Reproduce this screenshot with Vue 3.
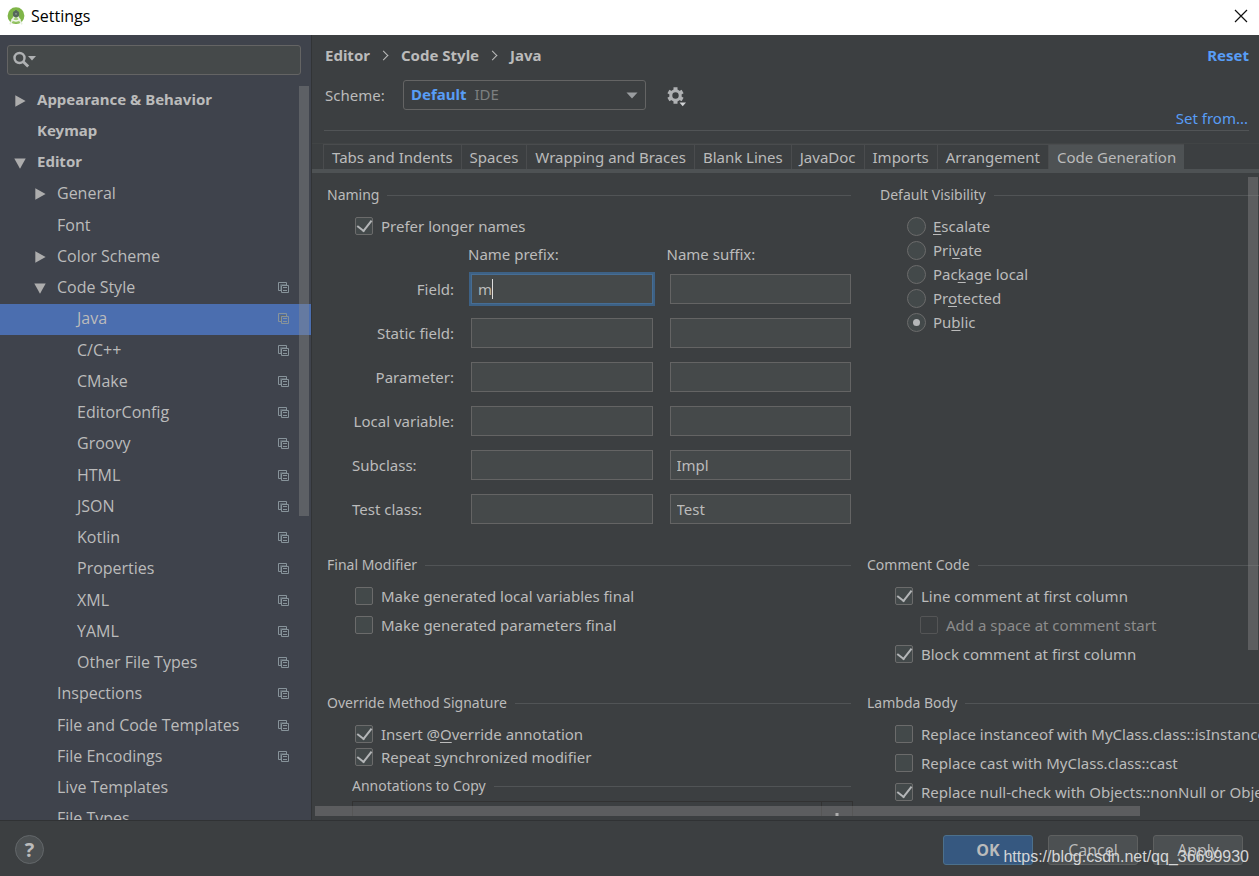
<script setup>
import { ref } from 'vue'

const tree = [
  { label: 'Appearance & Behavior', level: 0, arrow: 'right', bold: true },
  { label: 'Keymap', level: 0, bold: true },
  { label: 'Editor', level: 0, arrow: 'down', bold: true },
  { label: 'General', level: 1, arrow: 'right' },
  { label: 'Font', level: 1 },
  { label: 'Color Scheme', level: 1, arrow: 'right' },
  { label: 'Code Style', level: 1, arrow: 'down', copy: true },
  { label: 'Java', level: 2, copy: true, selected: true },
  { label: 'C/C++', level: 2, copy: true },
  { label: 'CMake', level: 2, copy: true },
  { label: 'EditorConfig', level: 2, copy: true },
  { label: 'Groovy', level: 2, copy: true },
  { label: 'HTML', level: 2, copy: true },
  { label: 'JSON', level: 2, copy: true },
  { label: 'Kotlin', level: 2, copy: true },
  { label: 'Properties', level: 2, copy: true },
  { label: 'XML', level: 2, copy: true },
  { label: 'YAML', level: 2, copy: true },
  { label: 'Other File Types', level: 2, copy: true },
  { label: 'Inspections', level: 1, copy: true },
  { label: 'File and Code Templates', level: 1, copy: true },
  { label: 'File Encodings', level: 1, copy: true },
  { label: 'Live Templates', level: 1 },
  { label: 'File Types', level: 1 }
]

const tabs = ['Tabs and Indents', 'Spaces', 'Wrapping and Braces', 'Blank Lines', 'JavaDoc', 'Imports', 'Arrangement', 'Code Generation']
const activeTab = ref('Code Generation')

const fields = ref([
  { id: 'field', label: 'Field:', prefix: 'm', suffix: '', focused: true },
  { id: 'static', label: 'Static field:', prefix: '', suffix: '' },
  { id: 'param', label: 'Parameter:', prefix: '', suffix: '' },
  { id: 'local', label: 'Local variable:', prefix: '', suffix: '' },
  { id: 'sub', label: 'Subclass:', prefix: '', suffix: 'Impl', start: true },
  { id: 'test', label: 'Test class:', prefix: '', suffix: 'Test', start: true }
])

// Each label is split as [before, mnemonic, after].
const visibility = ref('Public')
const visibilities = [
  { value: 'Escalate', parts: ['', 'E', 'scalate'] },
  { value: 'Private', parts: ['Pri', 'v', 'ate'] },
  { value: 'Package local', parts: ['Pac', 'k', 'age local'] },
  { value: 'Protected', parts: ['Pr', 'o', 'tected'] },
  { value: 'Public', parts: ['Pu', 'b', 'lic'] }
]
const search = ref('')
</script>

<template>
  <div class="window">
    <header class="titlebar">
      <svg class="logo" width="18" height="18" viewBox="0 0 18 18" aria-hidden="true">
        <circle cx="9" cy="8.7" r="8.4" fill="#7fb548" />
        <path d="M5 15.5 L8 8.5 H10 L13 15.5 Z" fill="#a5cf7a" />
        <path d="M7.8 8.6 L3 17.4 M10.2 8.6 L15 17.4" fill="none" stroke="#e6efdf" stroke-width="1.8" />
        <path d="M4.6 12 Q9 15.8 13.4 12" fill="none" stroke="#f3f6f0" stroke-width="1.4" />
        <circle cx="9" cy="7" r="3.2" fill="#56675b" />
        <path d="M8.2 3 h1.6 v2 h-1.6z" fill="#56675b" />
        <circle cx="9" cy="6.8" r="0.9" fill="#8fa093" />
      </svg>
      <h1>Settings</h1>
      <button class="close" aria-label="Close">
        <svg width="14" height="14" viewBox="0 0 14 14"><path d="M1 1 L13 13 M13 1 L1 13" stroke="#111" stroke-width="1.2" fill="none" /></svg>
      </button>
    </header>

    <div class="body">
      <aside class="sidebar">
        <div class="search">
          <svg width="24" height="18" viewBox="0 0 24 18" aria-hidden="true">
            <circle cx="6.5" cy="7" r="5" fill="none" stroke="#afb1b3" stroke-width="2.4" />
            <path d="M10 10.5 L15.2 15.6" stroke="#afb1b3" stroke-width="2.8" />
            <path d="M15 5 H23 L19 9.4 Z" fill="#afb1b3" />
          </svg>
          <input v-model="search" type="text" aria-label="Search settings" />
        </div>
        <nav class="tree">
          <a v-for="n in tree" :key="n.label" href="#" class="node" :class="['level' + n.level, { bold: n.bold, selected: n.selected }]">
            <span class="twist">
              <svg v-if="n.arrow === 'right'" width="12" height="12" viewBox="0 0 12 12"><path d="M1.3 0.3 L11.6 6 L1.3 11.7 Z" fill="#adadad" /></svg>
              <svg v-else-if="n.arrow === 'down'" width="12" height="11" viewBox="0 0 12 11"><path d="M0.3 0.5 H11.7 L6 10.8 Z" fill="#adadad" /></svg>
            </span>
            <span class="name">{{ n.label }}</span>
            <svg v-if="n.copy" class="copy" width="12" height="12" viewBox="0 0 12 12" aria-hidden="true">
              <path d="M3 8.5 H0.5 V0.5 H8.5 V3" fill="none" stroke="#87939a" />
              <path d="M2.5 8 V2.5 H8" fill="none" stroke="#5f6971" />
              <path d="M3.5 3.5 H10.5 V10.5 H3.5 Z" fill="none" stroke="#87939a" />
              <path d="M5 5.5 H9 M5 8.5 H9" stroke="#87939a" />
            </svg>
          </a>
        </nav>
        <div class="scroll side-scroll"></div>
      </aside>

      <main class="main">
        <div class="crumbs">
          <span>Editor</span><i></i><span>Code Style</span><i></i><span>Java</span>
          <a href="#" class="reset">Reset</a>
        </div>
        <div class="scheme">
          <label for="scheme">Scheme:</label>
          <div class="combo">
            <select id="scheme" aria-label="Scheme: Default IDE"><option></option></select>
            <div class="combo-text"><b>Default</b><span>IDE</span></div>
            <svg width="12" height="7" viewBox="0 0 12 7"><path d="M0.5 0.5 H11.5 L6 6.5 Z" fill="#9a9da0" /></svg>
          </div>
          <button class="gear" aria-label="Scheme actions">
            <svg width="20" height="20" viewBox="0 0 20 20">
              <circle cx="8.5" cy="8.5" r="4.7" fill="none" stroke="#afb1b3" stroke-width="3" />
              <path d="M8.5 0.3 V3.5 M8.5 13.5 V16.7 M1.4 4.4 L4 5.9 M13 11.1 L15.6 12.6 M1.4 12.6 L4 11.1 M13 5.9 L15.6 4.4" stroke="#afb1b3" stroke-width="4" />
              <path d="M11 14 H20 L15.5 20 Z" fill="#3c3f41" />
              <path d="M12.5 15.5 H19 L15.7 19.2 Z" fill="#d0d2d4" />
            </svg>
          </button>
        </div>
        <div class="set-from"><a href="#">Set from...</a></div>

        <div class="tabs" role="tablist">
          <button v-for="t in tabs" :key="t" role="tab" :aria-selected="t === activeTab" :class="{ active: t === activeTab }" @click="activeTab = t">{{ t }}</button>
        </div>

        <div class="viewport">
          <div class="grid">
            <section>
              <h2>Naming</h2>
              <label class="check"><input type="checkbox" checked /><span>Prefer longer names</span></label>
              <div class="naming">
                <span></span><span class="head">Name prefix:</span><span class="head">Name suffix:</span>
                <template v-for="f in fields" :key="f.id">
                  <label :for="f.id" :class="{ start: f.start }">{{ f.label }}</label>
                  <div class="cell" :class="{ focused: f.focused }">
                    <input :id="f.id" v-model="f.prefix" type="text" />
                    <span v-if="f.focused" class="caret"></span>
                  </div>
                  <div class="cell"><input v-model="f.suffix" type="text" :aria-label="f.label + ' suffix'" /></div>
                </template>
              </div>
            </section>
            <section class="visibility">
              <h2>Default Visibility</h2>
              <label v-for="v in visibilities" :key="v.value" class="check radio">
                <input v-model="visibility" type="radio" name="visibility" :value="v.value" />
                <span>{{ v.parts[0] }}<u>{{ v.parts[1] }}</u>{{ v.parts[2] }}</span>
              </label>
            </section>

            <section class="airy">
              <h2>Final Modifier</h2>
              <label class="check"><input type="checkbox" /><span>Make generated local variables final</span></label>
              <label class="check"><input type="checkbox" /><span>Make generated parameters final</span></label>
            </section>
            <section class="airy">
              <h2>Comment Code</h2>
              <label class="check"><input type="checkbox" checked /><span>Line comment at first column</span></label>
              <label class="check nested"><input type="checkbox" disabled /><span>Add a space at comment start</span></label>
              <label class="check"><input type="checkbox" checked /><span>Block comment at first column</span></label>
            </section>

            <section>
              <h2>Override Method Signature</h2>
              <label class="check"><input type="checkbox" checked /><span>Insert @<u>O</u>verride annotation</span></label>
              <label class="check"><input type="checkbox" checked /><span>Repeat <u>s</u>ynchronized modifier</span></label>
              <div class="annotations">
                <h2>Annotations to Copy</h2>
                <div class="list"><button aria-label="Add"><svg width="10" height="10" viewBox="0 0 10 10"><path d="M5 0 V10 M0 5 H10" stroke="#c4c4c4" stroke-width="3" /></svg></button></div>
              </div>
            </section>
            <section class="airy">
              <h2>Lambda Body</h2>
              <label class="check"><input type="checkbox" /><span>Replace instanceof with MyClass.class::isInstance</span></label>
              <label class="check"><input type="checkbox" /><span>Replace cast with MyClass.class::cast</span></label>
              <label class="check"><input type="checkbox" checked /><span>Replace null-check with Objects::nonNull or Objects::isNull</span></label>
            </section>
          </div>
          <div class="scroll v-scroll"></div>
          <div class="scroll h-scroll"></div>
        </div>
      </main>
    </div>

    <footer class="footer">
      <button class="help" aria-label="Help">?</button>
      <div class="actions">
        <button class="primary">OK</button>
        <button>Cancel</button>
        <button>Apply</button>
      </div>
      <span class="watermark">https://blog.csdn.net/qq_36699930</span>
    </footer>
  </div>
</template>

<style>
body { background: #3c3f41; }
</style>

<style scoped>
* { box-sizing: border-box; }
.window {
  display: flex; flex-direction: column; height: 100vh; overflow: hidden;
  background: #3c3f41; color: #bbb;
  font: 16px/20px "Open Sans", "Noto Sans", sans-serif;
}
button, input, select { font: inherit; color: inherit; margin: 0; }
button { background: none; border: 0; padding: 0; }
a { color: inherit; text-decoration: none; }
svg { display: block; flex: none; }
h1, h2 { margin: 0; font-weight: 400; }

.titlebar { display: flex; align-items: center; flex: none; height: 35px; padding: 0 11px 4px 7px; background: #fff; color: #000; }
.titlebar h1 { flex: 1; margin-left: 6px; font-size: 16px; }

.body { display: flex; flex: 1; min-height: 0; border-bottom: 1px solid #303234; }
.sidebar { position: relative; flex: none; width: 312px; padding-top: 10px; background: #3f434c; border-right: 1px solid #323436; overflow: hidden; }
.search { display: flex; align-items: center; height: 30px; margin: 0 10px 0 7px; padding-left: 5px; background: #45494a; border: 1px solid #646464; border-radius: 3px; }
.search input { flex: 1; min-width: 0; background: none; border: 0; outline: 0; }
.tree { display: grid; grid-auto-rows: 1fr; height: 750px; margin-top: 10px; }
.node { display: flex; align-items: center; padding-right: 21px; }
.level0 { padding-left: 14px; }
.level1 { padding-left: 34px; }
.level2 { padding-left: 54px; }
.twist { flex: none; width: 23px; }
.name { flex: 1; padding-bottom: 2px; }
.bold { font: 700 15px/20px "Noto Sans", sans-serif; }
.bold .name { padding-bottom: 4px; }
.selected { background: #4b6eaf; }
.scroll { position: absolute; background: rgba(140, 140, 140, 0.4); }
.side-scroll { top: 51px; right: 2px; width: 10px; height: 430px; }

.main { display: flex; flex-direction: column; flex: 1; min-width: 0; font: 15px/20px "Noto Sans", "Open Sans", sans-serif; }
.crumbs { display: flex; align-items: center; height: 40px; padding: 0 10px 0 13px; font-weight: 700; }
.crumbs i { width: 7px; height: 7px; margin: 0 14px 0 10px; border: solid #bbb; border-width: 1px 1px 0 0; transform: rotate(45deg); }
.reset, .set-from a { color: #589df6; }
.reset { margin-left: auto; }
.scheme { display: flex; align-items: center; height: 36px; margin-top: 2px; padding-left: 13px; }
.scheme > label { width: 78px; }
.combo { position: relative; display: flex; align-items: center; width: 243px; height: 30px; padding: 0 7px; border: 1px solid #646464; border-radius: 3px; }
.combo select { position: absolute; inset: 0; width: 100%; appearance: none; background: none; border: 0; }
.combo-text { display: flex; gap: 8px; flex: 1; padding-bottom: 2px; color: #7d7f80; pointer-events: none; }
.combo-text b { color: #589df6; }
.gear { margin: 3px 0 0 21px; }
.set-from { height: 18px; margin: 0 10px 12px 12px; padding-right: 1px; border-bottom: 1px solid #515456; text-align: right; line-height: 10px; }

.tabs { display: flex; flex: none; height: 30px; padding-left: 11px; border-bottom: 4px solid #4e5254; border-top: 1px solid #414445; }
.tabs button { padding: 0 8px 1px; border-left: 1px solid #4a4c4e; border-top: 1px solid #4a4c4e; white-space: nowrap; }
.tabs .active { background: #4e5254; }

.viewport { position: relative; flex: 1; min-height: 0; margin-bottom: 4px; padding: 12px 0 0 15px; overflow: hidden; }
.grid { display: grid; grid-template-columns: minmax(0, 131fr) minmax(0, 98fr); column-gap: 16px; row-gap: 25px; }
h2 { display: flex; align-items: center; gap: 8px; height: 20px; margin-bottom: 9px; font: 14px/20px "Noto Sans", sans-serif; white-space: nowrap; }
h2::after { content: ""; flex: 1; height: 1px; background: #515456; }
.check { display: flex; align-items: center; height: 23px; padding-left: 28px; white-space: nowrap; }
.airy h2 { margin-bottom: 6px; }
.airy .check { height: 29px; }
.check.nested { padding-left: 53px; color: #8c8c8c; }
.check input { appearance: none; flex: none; display: grid; place-items: center; width: 18px; height: 18px; margin-right: 8px; background: #43494a; border: 1px solid #6b6b6b; border-radius: 2px; }
.check input[type="checkbox"]:checked::before { content: ""; width: 7px; height: 12px; margin-top: -4px; border: solid #b4b6b8; border-width: 0 2px 2px 0; transform: rotate(38deg); }
.check input:disabled { background: none; border-color: #545556; }
.check.radio { height: 24px; padding-left: 27px; }
.check input[type="radio"] { width: 19px; height: 19px; margin-right: 7px; border-radius: 50%; }
.check input[type="radio"]:checked::before { content: ""; width: 7px; height: 7px; border-radius: 50%; background: #b4b6b8; }
.visibility { padding-left: 13px; }
u { text-underline-offset: 2px; }

.naming { display: grid; grid-template-columns: 102px 1fr 1fr; column-gap: 17px; row-gap: 14px; align-items: center; padding: 7px 0 6px 25px; }
.naming label { text-align: right; white-space: nowrap; }
.naming label.start { text-align: left; }
.head { height: 20px; margin: 0 0 -4px -3px; }
.cell { position: relative; height: 30px; }
.cell input { display: block; width: 100%; height: 30px; padding: 0 6px; background: #45494a; border: 1px solid #646464; outline: 0; }
.focused input { border-color: #466d94; box-shadow: 0 0 0 2px #3d6185; }
.caret { position: absolute; left: 21px; top: 5px; width: 1px; height: 20px; background: #ddd; }
.annotations { padding-left: 25px; margin-top: 8px; }
.annotations h2 { margin-bottom: 5px; }
.list { display: flex; justify-content: flex-end; height: 60px; border: 1px solid #323232; margin-right: -2px; }
.list button { display: flex; justify-content: center; width: 31px; padding-top: 11px; border-left: 1px solid #323232; }
.v-scroll { top: 4px; right: 1px; width: 10px; height: 473px; }
.h-scroll { left: 3px; bottom: 0; width: 825px; height: 10px; }

.footer { position: relative; display: flex; align-items: center; justify-content: space-between; flex: none; height: 55px; padding: 2px 16px 0 15px; }
.help { width: 29px; height: 29px; border-radius: 50%; background: #4c5052; border: 1px solid #63676a; font-size: 20px; font-weight: 700; line-height: 26px; }
.actions { display: flex; gap: 15px; }
.actions button { width: 90px; height: 30px; background: #4c5052; border: 1px solid #5e6060; border-radius: 3px; }
.actions .primary { background: #365880; border-color: #4c708c; font-weight: 700; }
.watermark { position: absolute; right: 10px; bottom: 9px; color: #d5d6d7; font: 16px/20px "Liberation Sans", Arial, sans-serif; }
</style>
